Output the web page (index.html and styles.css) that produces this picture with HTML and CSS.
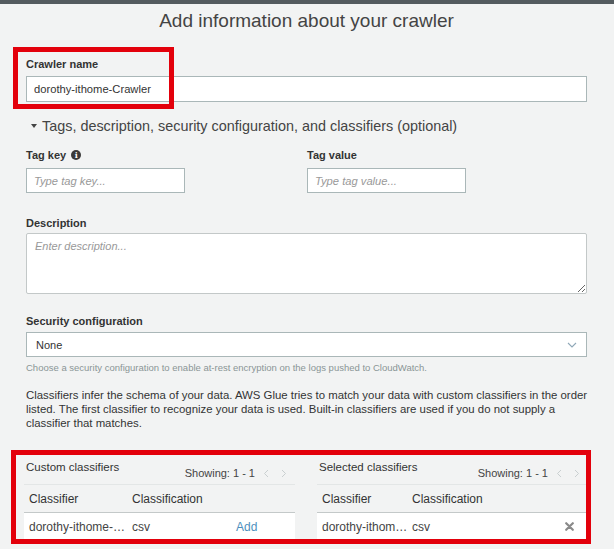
FILE: index.html
```html
<!DOCTYPE html>
<html>
<head>
<meta charset="utf-8">
<link rel="stylesheet" href="styles.css">
</head>
<body>
<div class="topbar"></div>
<main class="page">
  <h1 class="title">Add information about your crawler</h1>

  <div class="field field-name">
    <div class="label">Crawler name</div>
    <input class="input" type="text" value="dorothy-ithome-Crawler">
  </div>

  <div class="expander"><span class="caret"></span>Tags, description, security configuration, and classifiers (optional)</div>

  <div class="tags">
    <div class="tag-col">
      <div class="label">Tag key <span class="info">i</span></div>
      <input class="input tag-input" type="text" placeholder="Type tag key...">
    </div>
    <div class="tag-col">
      <div class="label">Tag value</div>
      <input class="input tag-input" type="text" placeholder="Type tag value...">
    </div>
  </div>

  <div class="field field-desc">
    <div class="label">Description</div>
    <textarea class="textarea" placeholder="Enter description..."></textarea>
  </div>

  <div class="field field-sec">
    <div class="label">Security configuration</div>
    <div class="select">
      <span>None</span>
      <svg class="chev" width="10" height="6" viewBox="0 0 10 6"><path d="M1 1 L5 5 L9 1" fill="none" stroke="#8fa8b8" stroke-width="1.1"/></svg>
    </div>
    <div class="help">Choose a security configuration to enable at-rest encryption on the logs pushed to CloudWatch.</div>
  </div>

  <p class="para">Classifiers infer the schema of your data. AWS Glue tries to match your data with custom classifiers in the order listed. The first classifier to recognize your data is used. Built-in classifiers are used if you do not supply a classifier that matches.</p>

  <div class="classifiers">
    <section class="panel">
      <div class="panel-head">
        <span class="panel-title">Custom classifiers</span>
        <span class="showing">Showing: 1 - 1
          <svg class="pg" width="6" height="9" viewBox="0 0 6 9"><path d="M5 1 L1.5 4.5 L5 8" fill="none" stroke="#c9cfd0" stroke-width="1"/></svg>
          <svg class="pg" width="6" height="9" viewBox="0 0 6 9"><path d="M1 1 L4.5 4.5 L1 8" fill="none" stroke="#c9cfd0" stroke-width="1"/></svg>
        </span>
      </div>
      <div class="trow thead left-cols">
        <span>Classifier</span><span>Classification</span><span></span>
      </div>
      <div class="trow tbody left-cols">
        <span>dorothy-ithome-…</span><span>csv</span><span class="add">Add</span>
      </div>
    </section>
    <section class="panel">
      <div class="panel-head">
        <span class="panel-title">Selected classifiers</span>
        <span class="showing">Showing: 1 - 1
          <svg class="pg" width="6" height="9" viewBox="0 0 6 9"><path d="M5 1 L1.5 4.5 L5 8" fill="none" stroke="#c9cfd0" stroke-width="1"/></svg>
          <svg class="pg" width="6" height="9" viewBox="0 0 6 9"><path d="M1 1 L4.5 4.5 L1 8" fill="none" stroke="#c9cfd0" stroke-width="1"/></svg>
        </span>
      </div>
      <div class="trow thead right-cols">
        <span>Classifier</span><span>Classification</span><span></span>
      </div>
      <div class="trow tbody right-cols">
        <span>dorothy-ithom…</span><span>csv</span>
        <svg class="remove" width="9" height="9" viewBox="0 0 9 9"><path d="M1.2 1.2 L7.8 7.8 M7.8 1.2 L1.2 7.8" stroke="#8a8a8a" stroke-width="2.2" stroke-linecap="round"/></svg>
      </div>
    </section>
  </div>
</main>
<div class="annot annot-name"></div>
<div class="annot annot-class"></div>
</body>
</html>
```

FILE: styles.css
```css
* { box-sizing: border-box; }

body {
  margin: 0;
  background: #f2f3f3;
  font-family: "Liberation Sans", Arial, sans-serif;
  color: #444;
}

.topbar {
  height: 4px;
  background: #545b5f;
}

.page {
  padding: 0 27px 0 26px;
}

.title {
  margin: 5px 0 0;
  font-size: 19px;
  line-height: 24px;
  font-weight: 400;
  text-align: center;
  color: #444;
}

.label {
  display: flex;
  align-items: center;
  gap: 5px;
  font-size: 11px;
  line-height: 14px;
  font-weight: 700;
  color: #333;
}

.info {
  display: inline-flex;
  align-items: center;
  justify-content: center;
  width: 10px;
  height: 10px;
  border-radius: 50%;
  background: #3a3a3a;
  color: #fff;
  font-size: 8px;
  font-weight: 700;
  line-height: 1;
  font-family: "DejaVu Serif", serif;
}

.field-name { margin-top: 24px; }

.input {
  display: block;
  width: 100%;
  height: 26px;
  margin: 5px 0 0;
  padding: 0 7px;
  border: 1px solid #aab7b8;
  border-radius: 0;
  background: #fff;
  font: 11.2px "Liberation Sans", Arial, sans-serif;
  color: #333;
  outline: none;
}

.input::placeholder,
.textarea::placeholder {
  color: #999;
  font-style: italic;
}

.expander {
  display: flex;
  align-items: center;
  margin-top: 15px;
  padding-left: 5px;
  font-size: 14.4px;
  line-height: 18px;
  color: #444;
}

.caret {
  width: 0;
  height: 0;
  border-left: 3.5px solid transparent;
  border-right: 3.5px solid transparent;
  border-top: 4px solid #444;
  margin-right: 5px;
}

.tags {
  display: grid;
  grid-template-columns: 281px 1fr;
  margin-top: 13px;
}

.tag-input {
  width: 159px;
  height: 25px;
  margin-top: 6px;
}

.field-desc { margin-top: 23px; }

.textarea {
  display: block;
  width: 100%;
  height: 61px;
  margin: 3px 0 0;
  padding: 6px 8px;
  border: 1px solid #c3c8c8;
  border-radius: 2px;
  background: #fff;
  font: 11px "Liberation Sans", Arial, sans-serif;
  color: #333;
  outline: none;
}

.field-sec { margin-top: 20px; }

.select {
  display: flex;
  align-items: center;
  justify-content: space-between;
  height: 25px;
  margin-top: 4px;
  padding: 0 9px 0 9px;
  border: 1px solid #aab7b8;
  background: #fff;
  font-size: 11px;
  color: #333;
}

.help {
  margin-top: 5px;
  font-size: 9.5px;
  line-height: 12px;
  color: #8a9596;
}

.para {
  margin: 14px -8px 0 0;
  font-size: 11.4px;
  line-height: 14px;
  color: #333;
}

.classifiers {
  display: grid;
  grid-template-columns: 271px 271px;
  gap: 22px;
  margin: 26px -1px 0 -2px;
}

.panel-head {
  display: flex;
  justify-content: space-between;
  height: 29px;
  padding: 0 8px 0 2px;
  border-bottom: 1px solid #e3e6e6;
}

.panel-title {
  align-self: flex-start;
  padding-top: 4px;
  font-size: 11.5px;
  line-height: 14px;
  color: #333;
}

.showing {
  align-self: flex-end;
  display: flex;
  align-items: center;
  gap: 0;
  padding-bottom: 4px;
  font-size: 11px;
  line-height: 14px;
  color: #444;
}

.pg { margin-left: 8px; }
.pg + .pg { margin-left: 12px; }

.trow {
  display: grid;
  align-items: center;
  padding-left: 5px;
  font-size: 12px;
}

.left-cols { grid-template-columns: 103px 104px 1fr; }
.right-cols { grid-template-columns: 90px 153px 1fr; }

.thead {
  height: 28px;
  border-bottom: 1px solid #c4c9c9;
  color: #333;
}

.tbody {
  height: 27px;
  background: #fff;
  color: #444;
}

.add { color: #4d8fbd; }

.remove { margin-left: 0; }

.annot {
  position: absolute;
  border: 5px solid #e3000b;
  pointer-events: none;
}

.annot-name {
  left: 13px;
  top: 47px;
  width: 161px;
  height: 62px;
}

.annot-class {
  left: 11px;
  top: 450px;
  width: 580px;
  height: 94px;
}
```
